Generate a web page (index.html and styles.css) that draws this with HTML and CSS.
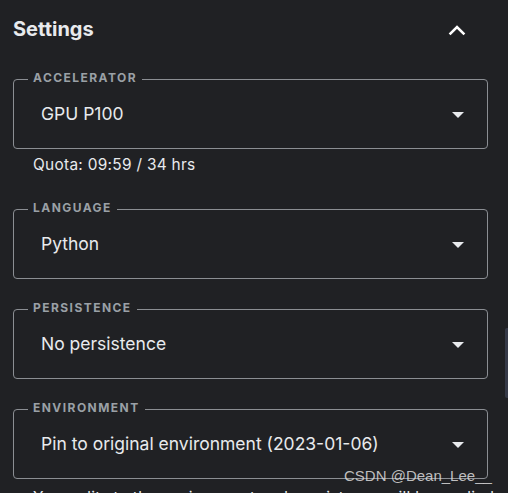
FILE: index.html
```html
<!DOCTYPE html>
<html lang="en">
<head>
<meta charset="utf-8">
<title>Settings</title>
<link rel="stylesheet" href="styles.css">
</head>
<body>
<div class="panel">
  <div class="header">
    <h2 class="title">Settings</h2>
    <button class="collapse" aria-label="Collapse">
      <svg width="18" height="12" viewBox="0 0 18 12"><polyline points="1.6,10.4 9,3 16.4,10.4" fill="none" stroke="#ffffff" stroke-width="2.6"/></svg>
    </button>
  </div>

  <div class="field">
    <div class="box">
      <span class="label">ACCELERATOR</span>
      <span class="value">GPU P100</span>
      <span class="caret"></span>
    </div>
    <div class="helper">Quota: 09:59 / 34 hrs</div>
  </div>

  <div class="field">
    <div class="box">
      <span class="label">LANGUAGE</span>
      <span class="value">Python</span>
      <span class="caret"></span>
    </div>
  </div>

  <div class="field">
    <div class="box">
      <span class="label">PERSISTENCE</span>
      <span class="value">No persistence</span>
      <span class="caret"></span>
    </div>
  </div>

  <div class="field">
    <div class="box">
      <span class="label">ENVIRONMENT</span>
      <span class="value">Pin to original environment (2023-01-06)</span>
      <span class="caret"></span>
    </div>
    <div class="helper note">Your edits to the environment and persistence will be applied</div>
  </div>
</div>
<div class="scroll-thumb"></div>
<div class="watermark">CSDN @Dean_Lee__</div>
</body>
</html>
```
FILE: styles.css
```css
html, body {
  margin: 0;
  padding: 0;
  background: #202124;
  width: 508px;
  height: 493px;
  overflow: hidden;
}
body {
  position: relative;
  font-family: Inter, "Noto Sans", sans-serif;
  color: #e8eaed;
}
.panel {
  padding: 17px 20px 0 13px;
}
.header {
  display: flex;
  align-items: center;
  justify-content: space-between;
  height: 24px;
}
.title {
  margin: 0;
  font-size: 20px;
  line-height: 24px;
  font-weight: 700;
  color: #e8eaed;
}
.collapse {
  background: none;
  border: 0;
  padding: 0;
  margin: 2px 22px 0 0;
  width: 18px;
  height: 12px;
  display: flex;
}
.field {
  margin-top: 38px;
}
.field + .field {
  margin-top: 30px;
}
.field:nth-child(3) {
  margin-top: 34px;
}
.box {
  position: relative;
  height: 68px;
  border: 1px solid #8b8e93;
  border-radius: 4px;
  display: flex;
  align-items: center;
  padding: 0 23px 0 27px;
}
.label {
  position: absolute;
  top: -9px;
  left: 14px;
  padding: 0 5px;
  background: #202124;
  font-size: 12px;
  line-height: 14px;
  font-weight: 700;
  letter-spacing: 1.45px;
  color: #9aa0a6;
}
.value {
  flex: 1;
  font-size: 17.5px;
  line-height: 22px;
  color: #e8eaed;
  white-space: nowrap;
}
.caret {
  width: 0;
  height: 0;
  border-left: 6px solid transparent;
  border-right: 6px solid transparent;
  border-top: 6px solid #e8eaed;
  margin-top: 1px;
}
.helper {
  margin-top: 6px;
  padding-left: 20px;
  font-size: 15.4px;
  line-height: 20px;
  letter-spacing: 0.3px;
  color: #e8eaed;
  white-space: nowrap;
}
.note {
  margin-top: 9px;
}
.scroll-thumb {
  position: absolute;
  right: 0;
  top: 328px;
  width: 3px;
  height: 70px;
  background: #363a48;
  border-radius: 2px 0 0 2px;
}
.watermark {
  position: absolute;
  left: 344px;
  top: 467px;
  font-family: "Liberation Sans", Arial, sans-serif;
  font-size: 15px;
  line-height: 17px;
  color: rgba(220, 220, 220, 0.85);
  white-space: nowrap;
}
```
